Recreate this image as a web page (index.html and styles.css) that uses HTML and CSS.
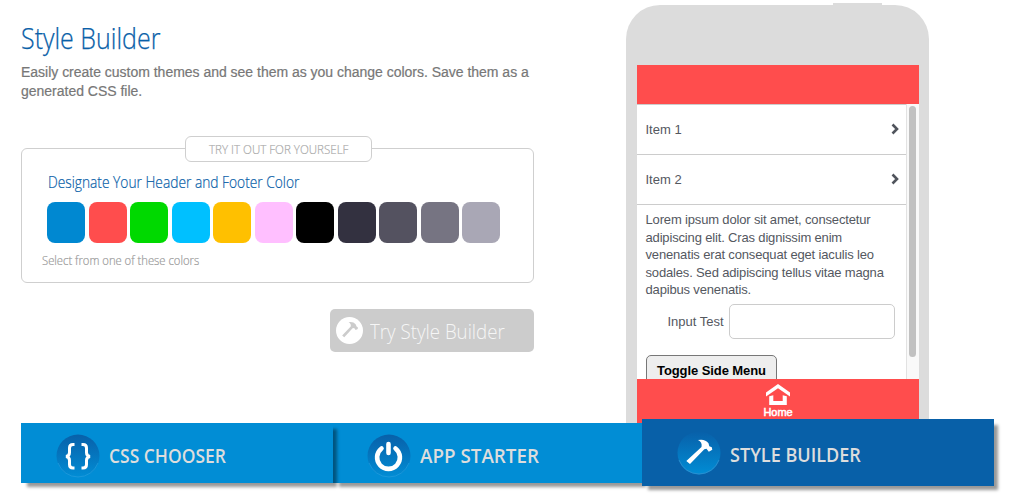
FILE: index.html
```html
<!DOCTYPE html>
<html lang="en">
<head>
<meta charset="utf-8">
<title>Style Builder</title>
<link rel="stylesheet" href="styles.css">
</head>
<body>
<main class="stage">
  <section class="intro">
    <h1 class="title"><span class="fit">Style Builder</span></h1>
    <p class="lead">Easily create custom themes and see them as you change colors. Save them as a<br>generated CSS file.</p>
    <div class="picker">
      <div class="legend"><span class="fit">TRY IT OUT FOR YOURSELF</span></div>
      <h2 class="picker-title"><span class="fit">Designate Your Header and Footer Color</span></h2>
      <div class="swatches">
        <i class="swatch blue"></i><i class="swatch red"></i><i class="swatch green"></i><i class="swatch cyan"></i><i class="swatch amber"></i><i class="swatch pink"></i><i class="swatch black"></i><i class="swatch gray1"></i><i class="swatch gray2"></i><i class="swatch gray3"></i><i class="swatch gray4"></i>
      </div>
      <p class="hint"><span class="fit">Select from one of these colors</span></p>
    </div>
    <a class="try">
      <svg class="try-icon" viewBox="0 0 44 44"><circle cx="22" cy="22" r="22" fill="#fff"/><path class="hammer-gray" d="M20.500 8.500Q28 7 32 12L33.500 15.500 35.500 16.500 35.500 19.500 32 21 29.500 18 27 18.500 13.500 33 10 30 24 15.500Q25 11 20.500 8.500Z"/></svg>
      <span class="fit">Try Style Builder</span>
    </a>
  </section>
  <section class="phone">
    <i class="power"></i>
    <div class="screen">
      <div class="bar"></div>
      <div class="view">
        <div class="content">
          <div class="item"><span>Item 1</span><svg class="chevron" viewBox="0 0 8 12"><path d="M1.500 1.500 6 6 1.500 10.500"/></svg></div>
          <div class="item"><span>Item 2</span><svg class="chevron" viewBox="0 0 8 12"><path d="M1.500 1.500 6 6 1.500 10.500"/></svg></div>
          <p class="lorem">Lorem ipsum dolor sit amet, consectetur<br>adipiscing elit. Cras dignissim enim<br>venenatis erat consequat eget iaculis leo<br>sodales. Sed adipiscing tellus vitae magna<br>dapibus venenatis.</p>
          <div class="field"><span>Input Test</span><i class="input"></i></div>
          <div class="toggle">Toggle Side Menu</div>
        </div>
        <div class="track"><i class="thumb"></i></div>
      </div>
      <div class="footer">
        <svg class="home" viewBox="0 0 24 21"><path d="M0 8.500 12 0 24 8.500V12.500L12 4.300 0 12.500Z"/><path d="M3.200 12.300 7.300 11.300V17H16.700V11.300L20.800 12.300V21H3.200Z"/></svg>
        <span>Home</span>
      </div>
    </div>
  </section>
</main>
<nav class="tabs">
  <a class="tab chooser"><svg class="tab-icon" viewBox="0 0 44 44"><defs><linearGradient id="dark" x2="0" y2="1"><stop offset="0" stop-color="#0860a9"/><stop offset="1" stop-color="#018dd5"/></linearGradient></defs><circle cx="22" cy="22" r="21.500" fill="url(#dark)"/><path d="M2 29A21.300 21.300 0 0 0 42 29" fill="none" stroke="#229bdc" stroke-width=".8"/><path d="M18.500 10.500H17Q13.500 10.500 13.500 14V18.500Q13.500 22 10 22.500 13.500 23 13.500 26.500V30.500Q13.500 34 17 34H18.500M25.500 10.500H27Q30.500 10.500 30.500 14V18.500Q30.500 22 34 22.500 30.500 23 30.500 26.500V30.500Q30.500 34 27 34H25.500" fill="none" stroke="#fff" stroke-width="3"/></svg><span class="fit">CSS CHOOSER</span></a>
  <a class="tab starter"><svg class="tab-icon" viewBox="0 0 44 44"><circle cx="22" cy="22" r="21.500" fill="url(#dark)"/><path d="M2 29A21.300 21.300 0 0 0 42 29" fill="none" stroke="#229bdc" stroke-width=".8"/><path d="M14.500 14.500A11.400 11.400 0 1 0 28.500 14.500M21.500 10V19" fill="none" stroke="#fff" stroke-width="4.600" stroke-linecap="round"/></svg><span class="fit">APP STARTER</span></a>
  <a class="tab active"><svg class="tab-icon" viewBox="0 0 44 44"><circle cx="22" cy="22" r="21.500" fill="url(#dark)"/><path d="M2 29A21.300 21.300 0 0 0 42 29" fill="none" stroke="#3b91cf" stroke-width=".7"/><path fill="#fff" d="M21 9Q28 7.500 31.500 12.300L32.300 15.300 34.800 16.300 35.300 18.800 31.800 20.800 29.500 17.800 27.300 18.200 13 33 9.300 30 24.500 16Q25.500 11.200 21 9Z"/></svg><span class="fit">STYLE BUILDER</span></a>
</nav>
</body>
</html>
```
FILE: styles.css
```css
* { box-sizing: border-box; }
body { margin: 0; background: #fff; font-family: "Liberation Sans", Arial, sans-serif; width: 1024px; height: 503px; overflow: hidden; }
h1, h2, p { margin: 0; font-weight: 400; }
i { display: block; font-style: normal; }
svg { display: block; flex: none; }
.fit { display: inline-block; white-space: nowrap; transform-origin: 0 50%; font-family: "Open Sans", "Noto Sans", sans-serif; font-weight: 300; }

.stage { height: 423px; padding-left: 21px; display: flex; overflow: hidden; }
.intro { width: 513px; margin-right: 92px; display: flex; flex-direction: column; }
.title { height: 43px; margin-top: 18px; font-size: 29px; line-height: 40px; color: #0860a8; }
.title .fit { transform: scaleX(.862); -webkit-text-stroke: .25px #0860a8; }
.lead { margin-top: 2px; font-size: 14px; line-height: 19px; letter-spacing: -.015px; color: #777; white-space: nowrap; -webkit-text-stroke: .2px #777; }

.picker { height: 135px; margin-top: 47px; border: 1px solid #cfcfcf; border-radius: 6px; }
.legend { width: 187px; height: 26px; margin: -13px 0 0 163px; padding-left: 23px; border: 1px solid #cfcfcf; border-radius: 6px; background: #fff; font-size: 13px; line-height: 25px; color: #aaa; }
.legend .fit { transform: scaleX(.89); -webkit-text-stroke: .2px #aaa; }
.picker-title { height: 32px; margin: 8px 0 0 25.500px; font-size: 16px; line-height: 24px; color: #0860a8; }
.picker-title .fit { transform: scaleX(.86); -webkit-text-stroke: .2px #0860a8; }
.swatches { display: flex; gap: 3.500px; padding-left: 25px; }
.swatch { width: 38px; height: 41px; border-radius: 8px; }
.blue { background: #0088d1; }
.red { background: #ff4d4d; }
.green { background: #00d900; }
.cyan { background: #00c0ff; }
.amber { background: #ffc000; }
.pink { background: #ffbfff; }
.black { background: #000; }
.gray1 { background: #333140; }
.gray2 { background: #545260; }
.gray3 { background: #767482; }
.gray4 { background: #a9a7b5; }
.hint { margin: 8px 0 0 20px; font-size: 12.500px; line-height: 20px; color: #999; }
.hint .fit { transform: scaleX(.9); -webkit-text-stroke: .2px #999; }

.try { width: 204px; height: 43px; margin-top: 26px; align-self: flex-end; display: flex; align-items: center; padding-left: 6px; border-radius: 5px; background: #ccc; color: #f6f6f6; font-size: 21px; line-height: 30px; }
.try .fit { transform: scaleX(.89); }
.try-icon { width: 27px; height: 27px; margin-right: 7px; }
.hammer-gray { fill: #ccc; }

.phone { position: relative; width: 303px; height: 460px; margin-top: 5px; padding: 60px 10px 0 11px; border-radius: 34px 34px 0 0; background: #dcdcdc; flex: none; }
.power { position: absolute; top: -2px; left: 207px; width: 49px; height: 4px; background: #dcdcdc; }
.screen { background: #fff; }
.bar { height: 39px; background: #ff4d4d; }
.view { height: 275px; display: flex; overflow: hidden; }
.content { width: 270px; flex: none; border-right: 1px solid #e2e2e2; color: #54585f; font-size: 13px; }
.item { height: 50px; display: flex; align-items: center; justify-content: space-between; padding: 0 7px 1px 8.500px; border-top: 1px solid #ccc; }
.chevron { width: 8px; height: 12px; }
.chevron path { fill: none; stroke: #50545c; stroke-width: 2.600; }
.lorem { padding: 6px 0 0 8.500px; border-top: 1px solid #ccc; line-height: 17.600px; letter-spacing: -.16px; white-space: nowrap; }
.field { display: flex; align-items: center; margin-top: 5px; padding-left: 30.500px; gap: 5px; }
.input { width: 166px; height: 35px; border: 1px solid #ccc; border-radius: 5px; }
.toggle { width: 131px; height: 44px; margin: 16px 0 0 9px; border: 1px solid #777; border-radius: 5px; background: #eee; color: #000; font-weight: 700; letter-spacing: -.08px; text-align: center; line-height: 30px; }
.track { flex: 1; padding: 2px 0 0 2px; background: #f9f9f9; }
.thumb { width: 7px; height: 251px; border-radius: 4px; background: #c1c1c1; }
.footer { height: 80px; display: flex; flex-direction: column; align-items: center; padding-top: 5px; background: #ff4d4d; color: #fff; font-size: 11px; line-height: 13px; letter-spacing: -.1px; -webkit-text-stroke: .5px #fff; }
.home { width: 24px; height: 21px; fill: #fff; margin-bottom: 1px; }

.tabs { display: flex; align-items: flex-start; padding-left: 21px; }
.tab { position: relative; height: 60px; display: flex; align-items: center; padding: 5px 0 0 35px; background: #018dd5; box-shadow: 5px 5px 3px -1px #999; color: #ddd; font-size: 20.500px; line-height: 30px; }
.tab .fit { font-weight: 600; padding-bottom: 2px; }
.tab-icon { width: 44px; height: 44px; margin-right: 9px; }
.chooser { width: 312px; z-index: 1; box-shadow: 5px 5px 3px -1px rgba(0, 0, 0, .4); }
.chooser .fit { transform: scaleX(.851); }
.starter { width: 309px; padding-left: 34px; }
.starter .fit { transform: scaleX(.917); }
.active { width: 352px; height: 67px; margin-top: -4px; padding-top: 1px; z-index: 2; background: #0860a8; }
.active .fit { padding: 2px 0 0; transform: scaleX(.881); }
```
